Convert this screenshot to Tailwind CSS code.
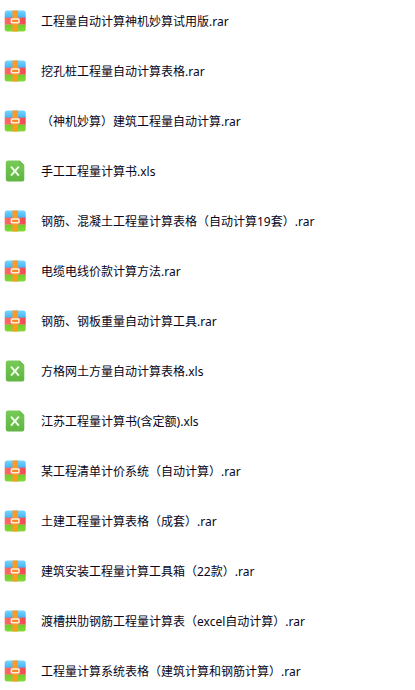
<!DOCTYPE html>
<html lang="zh-CN">
<head>
    <meta charset="UTF-8">
    <meta name="viewport" content="width=device-width, initial-scale=1.0">
    <title>文件列表</title>
    <script src="https://cdn.jsdelivr.net/npm/@tailwindcss/browser@4"></script>
</head>
<body class="bg-white">
    <!-- 文件图标 -->
    <svg class="absolute size-0" aria-hidden="true">
        <defs>
            <linearGradient id="blue" x1="0" y1="0" x2="0" y2="1">
                <stop offset="0" stop-color="#7ad6ff"/>
                <stop offset="1" stop-color="#42b4f4"/>
            </linearGradient>
            <linearGradient id="red" x1="0" y1="0" x2="1" y2="0">
                <stop offset="0" stop-color="#ff6a68"/>
                <stop offset="1" stop-color="#ee4a50"/>
            </linearGradient>
            <linearGradient id="lime" x1="0" y1="0" x2="0" y2="1">
                <stop offset="0" stop-color="#70c92c"/>
                <stop offset="1" stop-color="#86da38"/>
            </linearGradient>
            <linearGradient id="sheet" x1="0" y1="0" x2="0" y2="1">
                <stop offset="0" stop-color="#78cb58"/>
                <stop offset="1" stop-color="#5fb640"/>
            </linearGradient>
            <clipPath id="box">
                <rect x="0.7" y="0.5" width="21" height="21" rx="2.5"/>
            </clipPath>
        </defs>
        <symbol id="icon-rar" viewBox="0 0 22 22">
            <g clip-path="url(#box)">
                <rect width="22" height="8" fill="url(#blue)"/>
                <rect y="7.6" width="22" height="7.2" fill="url(#red)"/>
                <rect y="14.6" width="22" height="7.4" fill="url(#lime)"/>
                <rect x="8.5" width="5.5" height="22" fill="#fd9a22"/>
            </g>
            <rect x="7.4" y="9" width="7.6" height="3.8" rx="0.3" fill="#f98a2b" stroke="#fff0d8" stroke-width="1.5"/>
        </symbol>
        <symbol id="icon-xls" viewBox="0 0 22 22">
            <path d="M4 0.5H15.6L20.3 5.2V19.2A2.2 2.2 0 0 1 18.1 21.4H4A2.2 2.2 0 0 1 1.8 19.2V2.7A2.2 2.2 0 0 1 4 0.5Z" fill="url(#sheet)"/>
            <path d="M15.6 0.5L20.3 5.2H16.8A1.2 1.2 0 0 1 15.6 4Z" fill="#6abd4b"/>
            <path d="M7 6.6L14.8 15.6M14.8 6.6L7 15.6" stroke="#f4fff0" stroke-width="1.9" fill="none"/>
        </symbol>
    </svg>

    <ul class="flex flex-col gap-[26px] pt-[10px] pl-1 text-xs text-[#05051a] font-['Noto_Sans','Noto_Sans_CJK_SC',sans-serif]">
        <li><a href="#" class="flex items-start gap-[15px]"><svg class="size-[22px] shrink-0"><use href="#icon-rar"/></svg><span class="leading-6">工程量自动计算神机妙算试用版.rar</span></a></li>
        <li><a href="#" class="flex items-start gap-[15px]"><svg class="size-[22px] shrink-0"><use href="#icon-rar"/></svg><span class="leading-6">挖孔桩工程量自动计算表格.rar</span></a></li>
        <li><a href="#" class="flex items-start gap-[15px]"><svg class="size-[22px] shrink-0"><use href="#icon-rar"/></svg><span class="leading-6">（神机妙算）建筑工程量自动计算.rar</span></a></li>
        <li><a href="#" class="flex items-start gap-[15px]"><svg class="size-[22px] shrink-0"><use href="#icon-xls"/></svg><span class="leading-6">手工工程量计算书.xls</span></a></li>
        <li><a href="#" class="flex items-start gap-[15px]"><svg class="size-[22px] shrink-0"><use href="#icon-rar"/></svg><span class="leading-6">钢筋、混凝土工程量计算表格（自动计算19套）.rar</span></a></li>
        <li><a href="#" class="flex items-start gap-[15px]"><svg class="size-[22px] shrink-0"><use href="#icon-rar"/></svg><span class="leading-6">电缆电线价款计算方法.rar</span></a></li>
        <li><a href="#" class="flex items-start gap-[15px]"><svg class="size-[22px] shrink-0"><use href="#icon-rar"/></svg><span class="leading-6">钢筋、钢板重量自动计算工具.rar</span></a></li>
        <li><a href="#" class="flex items-start gap-[15px]"><svg class="size-[22px] shrink-0"><use href="#icon-xls"/></svg><span class="leading-6">方格网土方量自动计算表格.xls</span></a></li>
        <li><a href="#" class="flex items-start gap-[15px]"><svg class="size-[22px] shrink-0"><use href="#icon-xls"/></svg><span class="leading-6">江苏工程量计算书(含定额).xls</span></a></li>
        <li><a href="#" class="flex items-start gap-[15px]"><svg class="size-[22px] shrink-0"><use href="#icon-rar"/></svg><span class="leading-6">某工程清单计价系统（自动计算）.rar</span></a></li>
        <li><a href="#" class="flex items-start gap-[15px]"><svg class="size-[22px] shrink-0"><use href="#icon-rar"/></svg><span class="leading-6">土建工程量计算表格（成套）.rar</span></a></li>
        <li><a href="#" class="flex items-start gap-[15px]"><svg class="size-[22px] shrink-0"><use href="#icon-rar"/></svg><span class="leading-6">建筑安装工程量计算工具箱（22款）.rar</span></a></li>
        <li><a href="#" class="flex items-start gap-[15px]"><svg class="size-[22px] shrink-0"><use href="#icon-rar"/></svg><span class="leading-6">渡槽拱肋钢筋工程量计算表（excel自动计算）.rar</span></a></li>
        <li><a href="#" class="flex items-start gap-[15px]"><svg class="size-[22px] shrink-0"><use href="#icon-rar"/></svg><span class="leading-6">工程量计算系统表格（建筑计算和钢筋计算）.rar</span></a></li>
    </ul>
</body>
</html>
